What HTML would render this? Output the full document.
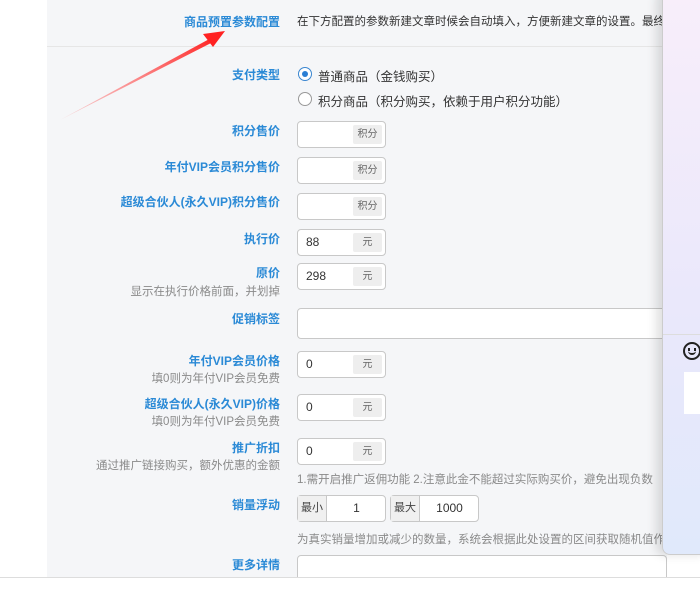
<!DOCTYPE html>
<html><head><meta charset="utf-8"><style>
*{margin:0;padding:0;box-sizing:border-box}
body{width:700px;height:596px;overflow:hidden;background:#fff;font-family:"Liberation Sans","Noto Sans CJK SC",sans-serif;position:relative}
#panel{position:absolute;left:47px;top:0;width:620px;height:577px;background:#f5f6f8}
.l{position:absolute;right:420px;font-size:12px;font-weight:bold;color:#2b8ad6;white-space:nowrap;text-align:right}
.s{position:absolute;right:420px;font-size:11.5px;color:#8a8a8a;white-space:nowrap}
.h{position:absolute;left:297px;font-size:11.5px;color:#8a8a8a;white-space:nowrap}
.in{position:absolute;left:297px;width:89px;height:27px;border:1px solid #c8c8c8;border-radius:4px;background:#fff;font-size:12px;color:#333;padding:5px 8px;line-height:15px}
.ad{position:absolute;right:3px;top:3px;width:29px;height:19px;background:#eee;border-radius:2px;font-size:10px;color:#666;text-align:center;line-height:19px}
.t{position:absolute;font-size:12px;color:#333;white-space:nowrap}
.r{position:absolute;left:298px;width:14px;height:14px;border:1px solid #999;border-radius:50%;background:#fff}
.g{position:absolute;top:0;height:25px;width:29px;background:#f0f0f0;border-right:1px solid #c8c8c8;font-size:11px;color:#444;text-align:center;line-height:25px}
</style></head><body>
<div id="panel"></div>
<div style="position:absolute;left:47px;top:46px;width:615px;height:1px;background:#e6e6e6"></div>
<div class="l" style="top:13px">商品预置参数配置</div>
<div class="t" style="left:297px;top:13px;font-size:11.5px">在下方配置的参数新建文章时候会自动填入，方便新建文章的设置。最终</div>

<svg style="position:absolute;left:55px;top:25px" width="175" height="100"><defs><linearGradient id="a" x1="0" y1="1" x2="1" y2="0"><stop offset="0" stop-color="#f55" stop-opacity="0.2"/><stop offset="1" stop-color="#f22"/></linearGradient></defs><polygon points="5,95 158,12 160,16" fill="url(#a)"/><polygon points="170,6 148,9 158,22" fill="#f22"/></svg>

<div class="l" style="top:66px">支付类型</div>
<div class="r" style="top:67px;border-color:#3a86d0"><div style="position:absolute;left:3px;top:3px;width:6px;height:6px;border-radius:50%;background:#2b7fd4"></div></div>
<div class="t" style="left:318px;top:66px;font-size:12.5px">普通商品（金钱购买）</div>
<div class="r" style="top:92px"></div>
<div class="t" style="left:318px;top:91px;font-size:12.5px">积分商品（积分购买，依赖于用户积分功能）</div>

<div class="l" style="top:122px">积分售价</div><div class="in" style="top:121px"><div class="ad">积分</div></div>
<div class="l" style="top:158px">年付VIP会员积分售价</div><div class="in" style="top:157px"><div class="ad">积分</div></div>
<div class="l" style="top:193px">超级合伙人(永久VIP)积分售价</div><div class="in" style="top:193px"><div class="ad">积分</div></div>
<div class="l" style="top:230px">执行价</div><div class="in" style="top:229px">88<div class="ad">元</div></div>
<div class="l" style="top:264px">原价</div><div class="s" style="top:283px">显示在执行价格前面，并划掉</div><div class="in" style="top:263px">298<div class="ad">元</div></div>
<div class="l" style="top:310px">促销标签</div><div class="in" style="top:308px;width:370px;height:31px"></div>
<div class="l" style="top:352px">年付VIP会员价格</div><div class="s" style="top:370px">填0则为年付VIP会员免费</div><div class="in" style="top:351px">0<div class="ad">元</div></div>
<div class="l" style="top:395px">超级合伙人(永久VIP)价格</div><div class="s" style="top:413px">填0则为年付VIP会员免费</div><div class="in" style="top:394px">0<div class="ad">元</div></div>
<div class="l" style="top:439px">推广折扣</div><div class="s" style="top:457px">通过推广链接购买，额外优惠的金额</div><div class="in" style="top:438px">0<div class="ad">元</div></div>
<div class="h" style="top:471px">1.需开启推广返佣功能 2.注意此金不能超过实际购买价，避免出现负数</div>
<div class="l" style="top:496px">销量浮动</div>
<div class="in" style="top:495px;height:27px;padding:0"><div class="g">最小</div><div style="position:absolute;left:30px;right:0;top:5px;text-align:center;font-size:12px">1</div></div>
<div class="in" style="top:495px;left:390px;height:27px;padding:0"><div class="g">最大</div><div style="position:absolute;left:30px;right:0;top:5px;text-align:center;font-size:12px">1000</div></div>
<div class="h" style="top:531px">为真实销量增加或减少的数量，系统会根据此处设置的区间获取随机值作为假量</div>
<div class="l" style="top:556px">更多详情</div><div class="in" style="top:555px;width:370px;height:30px"></div>
<div style="position:absolute;left:0;top:577px;width:700px;height:19px;background:#fff;border-top:1px solid #ddd"></div>

<div style="position:absolute;left:662px;top:-10px;width:50px;height:565px;border-radius:8px;background:linear-gradient(#f8eefa,#eae8fb 55%,#e0e9fb);box-shadow:-6px 0 10px rgba(0,0,0,0.12);border:1px solid #ccc;overflow:hidden">
<div style="position:absolute;left:0;top:343px;width:50px;height:1px;background:#ddd"></div>
<div style="position:absolute;left:20px;top:351px;width:18px;height:18px;border:2px solid #222;border-radius:50%"><div style="position:absolute;left:3px;top:4px;width:2px;height:3px;background:#222"></div><div style="position:absolute;left:9px;top:4px;width:2px;height:3px;background:#222"></div><div style="position:absolute;left:3px;top:7px;width:8px;height:4px;border-bottom:2px solid #222;border-radius:0 0 5px 5px"></div></div>
<div style="position:absolute;left:21px;top:381px;width:30px;height:42px;background:#fff"></div>
</div>
</body></html>
